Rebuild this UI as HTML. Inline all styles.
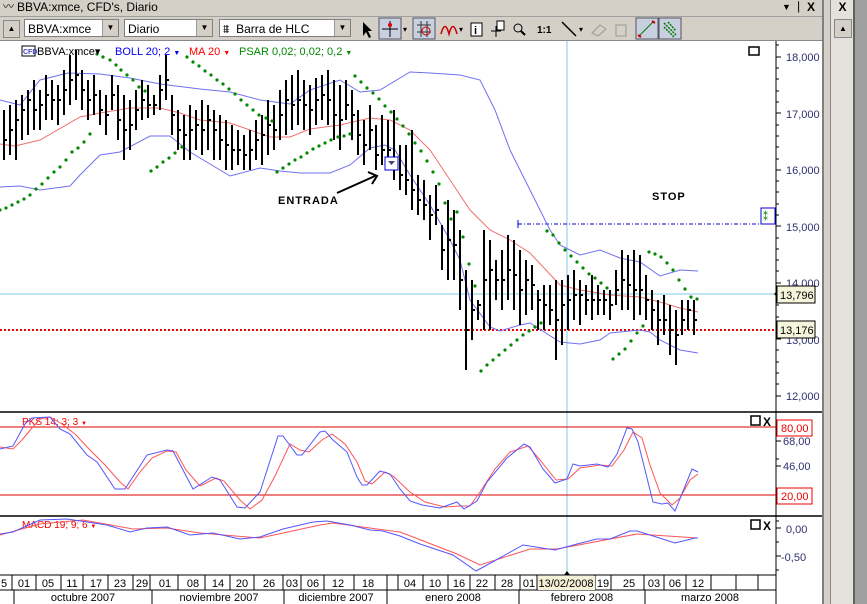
<!DOCTYPE html>
<html><head><meta charset="utf-8"><style>
*{margin:0;padding:0}
body{width:867px;height:604px;overflow:hidden;background:#d4d0c8;font-family:"Liberation Sans",sans-serif;position:relative}
.abs{position:absolute}
.combo{position:absolute;top:19px;height:18px;background:#fff;border:1px solid #7f7f7f;font-size:12px;line-height:18px;padding-left:3px;box-sizing:border-box}
.combo i{position:absolute;right:0;top:0;width:15px;height:16px;background:#d4d0c8;border-left:1px solid #999;font-style:normal;font-size:8px;text-align:center;line-height:16px}
</style></head><body>
<div class="abs" style="left:0;top:0;width:822px;height:16px;background:#d4d0c8;font-size:12px;line-height:15px;border-bottom:1px solid #a0a0a0">
<span style="position:absolute;left:3px;font-size:11px">〰</span><span style="position:absolute;left:17px">BBVA:xmce, CFD's, Diario</span>
<span style="position:absolute;left:782px;font-size:9px">▼</span><span style="position:absolute;left:795px;font-weight:bold">ᛁ</span><span style="position:absolute;left:807px;font-weight:bold">X</span></div>
<div class="abs" style="left:0;top:17px;width:822px;height:23px;background:#d4d0c8;border-bottom:1px solid #888"></div>
<div class="abs" style="left:3px;top:20px;width:15px;height:16px;border:1px solid #888;background:#d4d0c8;font-size:8px;text-align:center;line-height:16px">▲</div>
<div class="combo" style="left:24px;width:95px">BBVA:xmce<i>▼</i></div>
<div class="combo" style="left:124px;width:89px">Diario<i>▼</i></div>
<div class="combo" style="left:219px;width:132px">⩩ &nbsp;Barra de HLC<i>▼</i></div>
<svg class="abs" style="left:355px;top:17px" width="330" height="23">
<path d="M8 5 L8 19 L11 15 L14 21 L16 20 L13 14 L17 14Z" fill="#000"/>
<rect x="24" y="1" width="22" height="21" fill="#c8d0e0" stroke="#556"/>
<path d="M27 12H43M35 4V20" stroke="#000"/><circle cx="35" cy="8" r="2" fill="#d00"/>
<text x="48" y="15" font-size="8">▾</text>
<rect x="58" y="1" width="22" height="21" fill="#c8d0e0" stroke="#556"/>
<path d="M62 8H76M62 15H76M66 4V20M72 4V20" stroke="#333"/><circle cx="71" cy="14" r="4" fill="none" stroke="#d00"/>
<path d="M86 17 Q90 2 94 17 Q98 2 102 17" fill="none" stroke="#c00" stroke-width="1.5"/><text x="104" y="15" font-size="8">▾</text>
<rect x="116" y="6" width="11" height="13" fill="#fff" stroke="#000"/><text x="119" y="17" font-size="11" font-weight="bold">i</text>
<path d="M136 14H146M141 9V20" stroke="#000"/><rect x="142" y="4" width="7" height="9" fill="#fff" stroke="#000"/>
<circle cx="163" cy="11" r="4" fill="none" stroke="#000"/><path d="M166 14L170 18" stroke="#000" stroke-width="2"/>
<text x="182" y="16" font-size="10" font-weight="bold">1:1</text>
<path d="M207 5L221 19" stroke="#000" stroke-width="1.5"/><text x="224" y="15" font-size="8">▾</text>
<path d="M237 16L245 8L251 12L243 19Z" fill="none" stroke="#999"/>
<path d="M261 8H271V19H261Z" fill="none" stroke="#999"/>
<rect x="281" y="1" width="22" height="21" fill="#c8d0e0" stroke="#556"/><path d="M284 19L298 5" stroke="#070"/><path d="M283 18l3 2 M297 4l3 2" stroke="#c00" stroke-width="2"/>
<rect x="304" y="1" width="22" height="21" fill="#c8d0e0" stroke="#556"/><path d="M309 6l12 12M309 10l10 10M313 5l8 9" stroke="#070" stroke-width="1.5" stroke-dasharray="2 1"/>
</svg>
<div class="abs" style="left:0;top:41px;width:822px;height:563px;background:#fff"></div>
<div class="abs" style="left:822px;top:0;width:2px;height:604px;background:#808080"></div>
<div class="abs" style="left:824px;top:0;width:6px;height:604px;background:#d4d0c8;border-right:1px solid #888"></div>
<div class="abs" style="left:831px;top:0;width:22px;height:604px;background:#e4e1dc"></div>
<div class="abs" style="left:853px;top:0;width:14px;height:604px;background:#a0a0a0;border-left:2px solid #606060"></div>
<div class="abs" style="left:834px;top:0;width:17px;height:16px;font-weight:bold;font-size:12px;text-align:center">X</div>
<div class="abs" style="left:834px;top:19px;width:16px;height:17px;border:1px solid #888;background:#d4d0c8;font-size:8px;text-align:center;line-height:17px">▲</div>

<svg class="abs" style="left:0;top:0" width="822" height="604" font-family="Liberation Sans, sans-serif">
<line x1="0" y1="294" x2="776" y2="294" stroke="#7fc8e8"/>
<line x1="567" y1="41" x2="567" y2="575" stroke="#7fc8e8"/>
<line x1="0" y1="330" x2="776" y2="330" stroke="#e00" stroke-width="2" stroke-dasharray="2 2"/>
<line x1="518" y1="224" x2="776" y2="224" stroke="#00c" stroke-dasharray="4 2 1 2"/><line x1="518" y1="220" x2="518" y2="228" stroke="#00c"/>
<rect x="761" y="208" width="14" height="16" fill="#fff" stroke="#00c"/><text x="763" y="220" font-size="10" fill="#070">⁑</text>
<polyline fill="none" stroke="#7070f0" points="0,100 20,105 40,80 68,73 100,74 130,78 160,84 200,89 230,92 260,100 290,104 310,90 340,80 360,92 380,90 410,72 430,73 460,75 480,80 495,110 510,150 530,190 550,230 560,245 580,255 600,250 620,258 640,262 660,276 680,270 698,271"/>
<polyline fill="none" stroke="#f07070" points="0,144 15,146 40,140 80,117 100,113 130,108 160,108 180,113 200,120 230,123 270,137 290,137 310,129 340,125 370,118 390,120 410,130 430,150 450,180 470,210 490,230 510,240 530,253 560,285 580,290 610,295 640,297 660,302 680,308 698,312"/>
<polyline fill="none" stroke="#7070f0" points="0,187 20,186 40,190 70,186 80,175 100,155 120,152 150,136 170,136 190,152 200,158 230,176 260,168 280,171 300,173 330,173 350,165 370,148 385,145 395,150 410,175 430,205 450,240 460,260 470,300 490,327 500,331 520,325 530,323 560,342 580,344 600,340 610,333 640,330 650,332 660,340 680,350 698,353"/>
<path stroke="#000" stroke-width="2" fill="none" d="
M4 110V160M4 140H7 M10 105V155M10 130H13 M16 100V160M16 120H19 M22 95V140M22 110H25 M28 90V135M28 100H31 M34 80V130M34 110H37 M40 90V130M40 105H43 M46 75V120M46 95H49 M52 80V120M52 100H55 M58 85V125M58 100H61 M64 70V115M64 90H67 M70 55V105M70 80H73 M76 50V100M76 75H79 M82 70V110M82 90H85 M88 80V120M88 100H91 M94 75V115M94 95H97 M100 90V125M100 110H103 M106 95V135M106 115H109 M112 75V110M112 95H115 M118 85V140M118 120H121 M124 95V160M124 130H127 M130 100V150M130 125H133 M136 90V130M136 110H139 M142 80V120M142 100H145 M148 85V118M148 105H151 M154 95V115M154 105H157 M160 75V110M160 90H163 M166 55V100M166 80H169 M172 95V135M172 115H175 M178 110V150M178 130H181 M184 115V160M184 135H187 M190 105V160M190 130H193 M196 110V150M196 125H199 M202 100V155M202 130H205 M208 105V150M208 120H211 M214 110V160M214 130H217 M220 115V160M220 140H223 M226 120V170M226 145H229 M232 125V170M232 150H235 M238 130V165M238 150H241 M244 135V170M244 155H247 M250 130V170M250 150H253 M256 120V160M256 140H259 M262 115V165M262 135H265 M268 100V155M268 125H271 M274 105V150M274 130H277 M280 90V140M280 115H283 M286 80V135M286 100H289 M292 75V130M292 105H295 M298 70V125M298 100H301 M304 80V130M304 105H307 M310 85V135M310 110H313 M316 78V125M316 100H319 M322 75V120M322 95H325 M328 70V125M328 100H331 M334 80V140M334 115H337 M340 85V150M340 120H343 M346 80V120M346 105H349 M352 90V140M352 115H355 M358 110V155M358 135H361 M364 120V165M364 145H367 M370 105V150M370 130H373 M376 125V170M376 155H379 M382 115V165M382 150H385 M388 120V170M388 150H391 M394 110V180M394 160H397 M400 145V190M400 175H403 M406 145V195M406 180H409 M412 130V210M412 190H415 M418 175V215M418 200H421 M424 180V220M424 205H427 M430 195V240M430 215H433 M436 185V225M436 210H439 M442 225V270M442 250H445 M448 200V280M448 240H451 M454 210V280M454 245H457 M460 230V310M460 280H463 M466 270V370M466 330H469 M472 280V340M472 310H475 M478 300V320M478 305H481 M484 230V330M484 280H487 M490 240V330M490 270H493 M496 260V300M496 280H499 M502 250V310M502 280H505 M508 235V300M508 270H511 M514 240V310M514 275H517 M520 250V325M520 290H523 M526 260V315M526 280H529 M532 265V310M532 285H535 M538 290V330M538 300H541 M544 285V330M544 305H547 M550 285V325M550 310H553 M556 280V360M556 320H559 M562 280V345M562 305H565 M568 275V330M568 300H571 M574 270V320M574 295H577 M580 280V325M580 295H583 M586 285V315M586 300H589 M592 275V320M592 300H595 M598 285V315M598 300H601 M604 290V315M604 300H607 M610 290V320M610 305H613 M616 270V305M616 290H619 M622 250V310M622 280H625 M628 255V310M628 285H631 M634 250V320M634 290H637 M640 255V315M640 290H643 M646 275V320M646 300H649 M652 290V330M652 310H655 M658 300V345M658 320H661 M664 295V335M664 320H667 M670 305V355M670 330H673 M676 310V365M676 335H679 M682 300V335M682 320H685 M688 300V330M688 310H691 M694 300V335M694 320H697"/>
<g fill="#080">
<circle cx="0" cy="210" r="1.6"/><circle cx="6" cy="208" r="1.6"/><circle cx="12" cy="205" r="1.6"/><circle cx="18" cy="202" r="1.6"/><circle cx="24" cy="199" r="1.6"/><circle cx="30" cy="195" r="1.6"/><circle cx="36" cy="189" r="1.6"/><circle cx="42" cy="184" r="1.6"/><circle cx="48" cy="178" r="1.6"/><circle cx="54" cy="172" r="1.6"/><circle cx="60" cy="167" r="1.6"/><circle cx="66" cy="160" r="1.6"/><circle cx="72" cy="152" r="1.6"/><circle cx="78" cy="148" r="1.6"/><circle cx="84" cy="142" r="1.6"/><circle cx="90" cy="134" r="1.6"/>
<circle cx="97" cy="54" r="1.6"/><circle cx="103" cy="57" r="1.6"/><circle cx="110" cy="60" r="1.6"/><circle cx="116" cy="65" r="1.6"/><circle cx="121" cy="70" r="1.6"/><circle cx="127" cy="75" r="1.6"/><circle cx="133" cy="80" r="1.6"/><circle cx="139" cy="87" r="1.6"/><circle cx="145" cy="91" r="1.6"/>
<circle cx="151" cy="171" r="1.6"/><circle cx="157" cy="167" r="1.6"/><circle cx="163" cy="162" r="1.6"/><circle cx="169" cy="158" r="1.6"/><circle cx="175" cy="153" r="1.6"/><circle cx="182" cy="147" r="1.6"/>
<circle cx="187" cy="57" r="1.6"/><circle cx="193" cy="62" r="1.6"/><circle cx="199" cy="66" r="1.6"/><circle cx="205" cy="71" r="1.6"/><circle cx="211" cy="75" r="1.6"/><circle cx="217" cy="80" r="1.6"/><circle cx="223" cy="84" r="1.6"/><circle cx="229" cy="89" r="1.6"/><circle cx="235" cy="94" r="1.6"/><circle cx="241" cy="100" r="1.6"/><circle cx="247" cy="105" r="1.6"/><circle cx="253" cy="110" r="1.6"/><circle cx="259" cy="115" r="1.6"/><circle cx="266" cy="118" r="1.6"/><circle cx="272" cy="121" r="1.6"/>
<circle cx="277" cy="172" r="1.6"/><circle cx="283" cy="168" r="1.6"/><circle cx="289" cy="164" r="1.6"/><circle cx="295" cy="160" r="1.6"/><circle cx="301" cy="157" r="1.6"/><circle cx="307" cy="153" r="1.6"/><circle cx="313" cy="149" r="1.6"/><circle cx="319" cy="146" r="1.6"/><circle cx="325" cy="143" r="1.6"/><circle cx="331" cy="140" r="1.6"/><circle cx="338" cy="137" r="1.6"/><circle cx="344" cy="136" r="1.6"/><circle cx="350" cy="134" r="1.6"/>
<circle cx="355" cy="76" r="1.6"/><circle cx="361" cy="82" r="1.6"/><circle cx="367" cy="88" r="1.6"/><circle cx="373" cy="93" r="1.6"/><circle cx="379" cy="99" r="1.6"/><circle cx="385" cy="106" r="1.6"/><circle cx="391" cy="112" r="1.6"/><circle cx="397" cy="119" r="1.6"/><circle cx="403" cy="126" r="1.6"/><circle cx="409" cy="134" r="1.6"/><circle cx="415" cy="143" r="1.6"/><circle cx="421" cy="151" r="1.6"/><circle cx="427" cy="161" r="1.6"/><circle cx="433" cy="172" r="1.6"/><circle cx="439" cy="184" r="1.6"/><circle cx="445" cy="203" r="1.6"/><circle cx="451" cy="219" r="1.6"/><circle cx="457" cy="212" r="1.6"/><circle cx="463" cy="237" r="1.6"/><circle cx="469" cy="264" r="1.6"/><circle cx="475" cy="286" r="1.6"/>
<circle cx="481" cy="371" r="1.6"/><circle cx="487" cy="365" r="1.6"/><circle cx="493" cy="360" r="1.6"/><circle cx="499" cy="355" r="1.6"/><circle cx="505" cy="350" r="1.6"/><circle cx="511" cy="345" r="1.6"/><circle cx="517" cy="340" r="1.6"/><circle cx="523" cy="335" r="1.6"/><circle cx="529" cy="331" r="1.6"/><circle cx="535" cy="327" r="1.6"/><circle cx="541" cy="323" r="1.6"/>
<circle cx="547" cy="231" r="1.6"/><circle cx="553" cy="235" r="1.6"/><circle cx="559" cy="243" r="1.6"/><circle cx="565" cy="250" r="1.6"/><circle cx="571" cy="256" r="1.6"/><circle cx="577" cy="262" r="1.6"/><circle cx="583" cy="268" r="1.6"/><circle cx="589" cy="274" r="1.6"/><circle cx="595" cy="278" r="1.6"/><circle cx="601" cy="283" r="1.6"/><circle cx="607" cy="288" r="1.6"/>
<circle cx="613" cy="359" r="1.6"/><circle cx="619" cy="354" r="1.6"/><circle cx="625" cy="349" r="1.6"/><circle cx="631" cy="341" r="1.6"/><circle cx="637" cy="333" r="1.6"/><circle cx="643" cy="326" r="1.6"/>
<circle cx="649" cy="252" r="1.6"/><circle cx="655" cy="254" r="1.6"/><circle cx="661" cy="257" r="1.6"/><circle cx="667" cy="263" r="1.6"/><circle cx="673" cy="270" r="1.6"/><circle cx="679" cy="280" r="1.6"/><circle cx="685" cy="289" r="1.6"/><circle cx="691" cy="297" r="1.6"/><circle cx="697" cy="299" r="1.6"/>
</g>
<rect x="385" y="157" width="13" height="13" fill="#fff" stroke="#00c"/><path d="M388 161h7l-3.5 4z" fill="#447"/>
<path d="M337 193L375 176M368 172l9 4-5 8" stroke="#000" stroke-width="2" fill="none"/>
<text x="278" y="204" font-size="11" font-weight="bold" letter-spacing="1">ENTRADA</text>
<text x="652" y="200" font-size="11" font-weight="bold" letter-spacing="1">STOP</text>
<rect x="22" y="46" width="13" height="10" fill="#fff" stroke="#000"/><text x="23" y="54" font-size="7" fill="#44c" font-weight="bold">CFD</text>
<text x="37" y="55" font-size="11">BBVA:xmce▾</text>
<text x="115" y="55" font-size="11" fill="#00f">BOLL 20; 2 <tspan font-size="7">▼</tspan></text>
<text x="189" y="55" font-size="11" fill="#f00">MA 20 <tspan font-size="7">▼</tspan></text>
<text x="239" y="55" font-size="11" fill="#080">PSAR 0,02; 0,02; 0,2 <tspan font-size="7"> ▼</tspan></text>
<rect x="749" y="47" width="10" height="8" fill="#fff" stroke="#000" stroke-width="1.5"/>
<line x1="776" y1="41" x2="776" y2="575" stroke="#000"/>
<g stroke="#000"><path d="M776 57h5M776 113h5M776 170h5M776 226h5M776 283h5M776 339h5M776 396h5 M776 68h3M776 79h3M776 91h3M776 102h3M776 125h3M776 136h3M776 147h3M776 159h3M776 181h3M776 192h3M776 204h3M776 215h3M776 238h3M776 249h3M776 260h3M776 271h3M776 294h3M776 305h3M776 317h3M776 328h3M776 350h3M776 362h3M776 373h3M776 384h3M776 45h3"/></g>
<g font-size="11" fill="#303070"><text x="786" y="61">18,000</text><text x="786" y="118">17,000</text><text x="786" y="174">16,000</text><text x="786" y="231">15,000</text><text x="786" y="287">14,000</text><text x="786" y="344">13,000</text><text x="786" y="400">12,000</text></g>
<path d="M774 294l4-4v8z" fill="#000"/>
<rect x="777" y="286" width="38" height="17" fill="#f5f5dc" stroke="#000"/><text x="780" y="299" font-size="11">13,796</text>
<rect x="777" y="321" width="38" height="17" fill="#f5f5dc" stroke="#000"/><text x="780" y="334" font-size="11">13,176</text>
<line x1="0" y1="412" x2="822" y2="412" stroke="#000" stroke-width="1.5"/>
<line x1="0" y1="427" x2="776" y2="427" stroke="#d00"/><line x1="0" y1="495" x2="776" y2="495" stroke="#d00"/>
<text x="22" y="425" font-size="10" fill="#e00">PKS 14; 3; 3 <tspan font-size="6">▼</tspan></text>
<rect x="751" y="416" width="9" height="9" fill="#fff" stroke="#000" stroke-width="1.5"/><text x="763" y="426" font-size="12" font-weight="bold">X</text>
<g fill="none">
<polyline stroke="#f55" points="0,447 13,449 22,440 32,428 40,419 50,417 62,424 75,434 90,450 105,465 120,482 128,489 140,472 152,458 167,451 176,452 186,470 200,486 216,478 224,481 240,500 250,509 262,500 275,476 290,444 300,450 309,452 322,440 332,434 345,444 357,462 365,481 372,484 385,472 393,476 410,492 425,502 445,507 460,506 470,506 480,492 495,469 510,452 528,446 540,460 556,480 568,479 580,468 600,465 612,466 624,450 633,432 642,438 650,465 660,493 672,505 680,498 690,480 698,474"/>
<polyline stroke="#55f" points="0,449 13,446 25,424 32,418 50,417 60,429 70,434 87,455 97,462 115,489 125,489 147,455 167,450 173,451 193,489 212,477 220,480 237,507 245,508 260,492 278,436 283,436 297,455 302,455 320,432 325,431 333,440 347,452 357,477 362,485 367,485 380,471 390,474 400,489 410,501 422,505 440,508 457,502 464,509 477,501 487,482 507,458 524,444 530,447 543,469 555,483 567,479 573,464 580,466 597,464 608,467 617,454 627,428 632,429 638,442 653,502 662,504 668,503 675,511 692,469 698,472"/>
</g>
<text x="783" y="445" font-size="11" fill="#303070">68,00</text><text x="783" y="470" font-size="11" fill="#303070">46,00</text>
<rect x="777" y="420" width="35" height="16" fill="#fff" stroke="#e00"/><text x="781" y="432" font-size="11" fill="#e00">80,00</text>
<rect x="777" y="488" width="35" height="16" fill="#fff" stroke="#e00"/><text x="781" y="500" font-size="11" fill="#e00">20,00</text>
<line x1="0" y1="516" x2="822" y2="516" stroke="#000" stroke-width="1.5"/>
<text x="22" y="528" font-size="10" fill="#e00">MACD 19; 9; 6 <tspan font-size="6">▼</tspan></text>
<rect x="751" y="520" width="9" height="9" fill="#fff" stroke="#000" stroke-width="1.5"/><text x="763" y="530" font-size="12" font-weight="bold">X</text>
<g fill="none">
<polyline stroke="#f55" points="0,535 40,524 83,520 133,529 167,528 200,533 260,538 320,525 333,523 400,532 457,554 480,565 530,549 557,549 637,534 698,538"/>
<polyline stroke="#55f" points="0,534 13,532 40,520 67,519 87,522 107,525 130,532 147,528 167,527 190,535 213,533 240,539 260,537 283,529 313,522 327,521 350,525 370,530 383,531 400,536 420,544 453,555 476,571 487,565 523,545 555,550 577,544 597,539 610,539 630,531 637,531 650,535 675,543 695,538 698,538"/>
</g>
<g font-size="11" fill="#303070"><text x="786" y="533">0,00</text><text x="781" y="561">-0,50</text></g>
<path d="M776 521h3M776 528h5M776 542h3M776 556h5M776 570h3M776 459h3M776 441h5M776 466h5" stroke="#000"/>
<line x1="0" y1="575" x2="776" y2="575" stroke="#000"/>
<line x1="0" y1="590" x2="776" y2="590" stroke="#000"/>
<path d="M567 571l-3 4h6z" fill="#000"/>
<g stroke="#000"><path d="M12 575v15M36 575v15M61 575v15M83 575v15M108 575v15M133 575v15M150 575v15M178 575v15M205 575v15M230 575v15M254 575v15M283 575v15M301 575v15M324 575v15M354 575v15M387 575v15M398 575v15M423 575v15M448 575v15M470 575v15M495 575v15M520 575v15M537 575v15M595 575v15M611 575v15M644 575v15M664 575v15M686 575v15M711 575v15M736 575v15M758 575v15M776 575v15 M14 590v14M152 590v14M284 590v14M387 590v14M519 590v14M645 590v14M776 590v14"/></g>
<rect x="538" y="576" width="57" height="14" fill="#f5f0d8"/>
<g font-size="11" text-anchor="middle"><text x="4" y="587">5</text><text x="24" y="587">01</text><text x="48" y="587">05</text><text x="72" y="587">11</text><text x="96" y="587">17</text><text x="120" y="587">23</text><text x="142" y="587">29</text><text x="165" y="587">01</text><text x="193" y="587">08</text><text x="218" y="587">14</text><text x="242" y="587">20</text><text x="269" y="587">26</text><text x="292" y="587">03</text><text x="313" y="587">06</text><text x="338" y="587">12</text><text x="368" y="587">18</text><text x="410" y="587">04</text><text x="435" y="587">10</text><text x="459" y="587">16</text><text x="482" y="587">22</text><text x="507" y="587">28</text><text x="529" y="587">01</text><text x="566" y="587">13/02/2008</text><text x="603" y="587">19</text><text x="629" y="587">25</text><text x="654" y="587">03</text><text x="675" y="587">06</text><text x="698" y="587">12</text>
<text x="83" y="601">octubre 2007</text><text x="219" y="601">noviembre 2007</text><text x="336" y="601">diciembre 2007</text><text x="453" y="601">enero 2008</text><text x="582" y="601">febrero 2008</text><text x="710" y="601">marzo 2008</text></g>
</svg>
</body></html>
